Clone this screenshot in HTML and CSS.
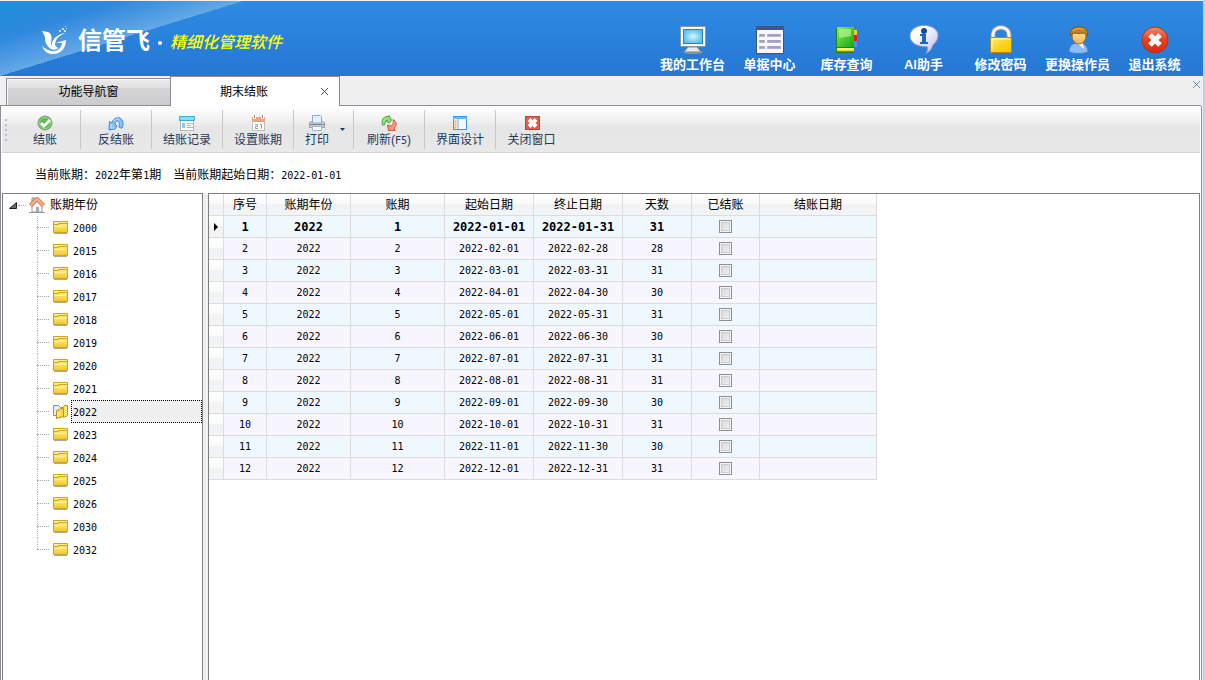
FILE: index.html
```html
<!DOCTYPE html>
<html lang="zh-CN">
  <head>
    <meta charset="utf-8">
    <title>期末结账</title>
    <link rel="stylesheet" href="styles.css">
  </head>
  <body>
    <!-- Shared icons and gradients -->
    <svg class="sprite" width="0" height="0" aria-hidden="true">
      <defs>
        <linearGradient id="g-folder" x1="0" y1="0" x2="0" y2="1">
          <stop offset="0" stop-color="#fff59a"/><stop offset="1" stop-color="#f2c62c"/>
        </linearGradient>
        <radialGradient id="g-screen">
          <stop offset="0" stop-color="#d4f8ff"/><stop offset="1" stop-color="#5cc0ee"/>
        </radialGradient>
        <linearGradient id="g-green" x1="0" y1="0" x2="1" y2="1">
          <stop offset="0" stop-color="#8cec58"/><stop offset="1" stop-color="#12a812"/>
        </linearGradient>
        <linearGradient id="g-bubble" x1="0" y1="0" x2="1" y2="1">
          <stop offset="0.3" stop-color="#fff"/><stop offset="1" stop-color="#b9b9ea"/>
        </linearGradient>
        <linearGradient id="g-lock" x1="0" y1="0" x2="1" y2="1">
          <stop offset="0" stop-color="#fff27a"/><stop offset="0.5" stop-color="#ffd21c"/><stop offset="1" stop-color="#ffc400"/>
        </linearGradient>
        <linearGradient id="g-red" x1="0" y1="0" x2="0" y2="1">
          <stop offset="0" stop-color="#f58a6c"/><stop offset="0.5" stop-color="#e84020"/><stop offset="1" stop-color="#d82c10"/>
        </linearGradient>
        <linearGradient id="g-skin" x1="0" y1="0" x2="0" y2="1">
          <stop offset="0" stop-color="#ffe9a8"/><stop offset="1" stop-color="#f4b45c"/>
        </linearGradient>
      </defs>
      <symbol id="folder" viewBox="0 0 15 14">
        <path d="M1 12.500h13" stroke="#a8a8a8"/>
        <path d="M.5.5h14v11H.5z" fill="url(#g-folder)" stroke="#d2a21a"/>
        <path d="M1 3.500h4.500v-1H14" fill="none" stroke="#d2a21a"/>
        <path d="M2 5.500h11" stroke="#fff38c"/>
      </symbol>
    </svg>

    <header class="app-header">
      <div class="brand">
        <svg class="brand-mark" viewBox="0 0 26 28" aria-hidden="true">
          <path d="M0 5l6 1c4 2 4 6 3 11v6C3 19 3 14 3 11z" fill="#fff"/>
          <path d="M24 7C14 8 9 14 9 23c2 1 5 1 7-1-2-1-3-3-3-4 1-6 5-9 11-11z" fill="#fff"/>
          <path d="M14 17l10-3c0 8-5 14-13 14-6 0-9-3-11-8 5 5 13 7 17 3 2-2 3-4 3-6z" fill="#fff"/>
          <path d="M17 4h2v2h-2zM20 2h2v2h-2zM23 0h1v1h-1zM22 4h2v2h-2zM24 2h1v1h-1z" fill="#c5e0fa"/>
        </svg>
        <span class="brand-name">信管飞</span>
        <span class="brand-dot"></span>
        <span class="brand-slogan">精细化管理软件</span>
      </div>
      <nav class="main-nav">
        <button class="nav-button">
          <svg viewBox="0 0 30 30" aria-hidden="true">
            <ellipse cx="15" cy="27" rx="10" ry="2" fill="#8496a6"/>
            <path d="M10 22h9l4 5H6z" fill="#e6eaec" stroke="#7c8994"/>
            <rect x="2.500" y="1.500" width="25" height="20" rx="1" fill="#f5f6f4" stroke="#8c989c"/>
            <rect x="5.500" y="4.500" width="19" height="14" fill="url(#g-screen)" stroke="#2f83ae"/>
          </svg>
          <span>我的工作台</span>
        </button>
        <button class="nav-button">
          <svg viewBox="0 0 30 30" aria-hidden="true">
            <rect x="1.500" y="1.500" width="27" height="27" fill="#f7f7fc" stroke="#44507c"/>
            <path d="M1 1h28v4H1z" fill="#46527f"/>
            <path d="M4 9h6v3H4zM4 15h6v3H4zM4 21h6v3H4zM12 9h14v3H12zM12 15h14v3H12zM12 21h14v3H12z" fill="#b3b3cb"/>
            <path d="M5 10h4M5 16h4M5 22h4M13 10h12M13 16h12M13 22h12" stroke="#9090b2"/>
          </svg>
          <span>单据中心</span>
        </button>
        <button class="nav-button">
          <svg viewBox="0 0 30 30" aria-hidden="true">
            <path d="M22 5h3v5h-3z" fill="#ffc83c"/>
            <path d="M22 10h3v6h-3z" fill="#e02010"/>
            <path d="M22 16h3v6h-3z" fill="#5590f0"/>
            <path d="M4 2h18v26H4z" fill="#168a18"/>
            <path d="M5 2h17v20H5z" fill="url(#g-green)"/>
            <path d="M7 4h12v7l-12 2z" fill="#b6f58a" opacity=".7"/>
            <path d="M5 23h17v3H5z" fill="#fff078"/>
            <path d="M5 26h17" stroke="#e8a800"/>
          </svg>
          <span>库存查询</span>
        </button>
        <button class="nav-button">
          <svg viewBox="0 0 30 30" aria-hidden="true">
            <path d="M15 .5c8 0 14 4 14 10 0 4-2 7-5 9-1 4-3 7-7 9 2-3 2-5 1-7C7 22 1 17 1 11 1 5 7 .5 15 .5z" fill="url(#g-bubble)" stroke="#9a9ccc"/>
            <circle cx="15" cy="6" r="3" fill="#17489c"/>
            <path d="M11 9h6v8h2v2h-8v-2h2v-6h-2z" fill="#1768d0"/>
          </svg>
          <span>AI助手</span>
        </button>
        <button class="nav-button">
          <svg viewBox="0 0 30 30" aria-hidden="true">
            <path d="M7 14V10c0-10 16-10 16 0v4" fill="none" stroke="#8e98a8" stroke-width="5"/>
            <path d="M7 14V10c0-10 16-10 16 0v4" fill="none" stroke="#f4f4f8" stroke-width="3"/>
            <rect x="4.500" y="12.500" width="21" height="15" fill="url(#g-lock)" stroke="#b88a10"/>
            <path d="M6 14h18M6 14v12" stroke="#fffbc0" fill="none"/>
          </svg>
          <span>修改密码</span>
        </button>
        <button class="nav-button">
          <svg viewBox="0 0 30 30" aria-hidden="true">
            <path d="M6 27c0-6 3-9 9-9s10 3 10 9c-5 2-14 2-19 0z" fill="#8cbcf6" stroke="#4080d4"/>
            <path d="M14 18h6l1 6z" fill="#fff"/>
            <ellipse cx="16" cy="11" rx="7" ry="8" fill="url(#g-skin)" stroke="#a86818"/>
            <path d="M8 11C6 4 10 2 16 2s10 3 8 9c-1-2-2-3-3-3-5 1-9 0-11 0z" fill="#c9801e" stroke="#8a5410"/>
            <path d="M10 6c3-3 8-3 11-1" stroke="#eeb850" fill="none"/>
          </svg>
          <span>更换操作员</span>
        </button>
        <button class="nav-button">
          <svg viewBox="0 0 30 30" aria-hidden="true">
            <circle cx="15" cy="15" r="13" fill="url(#g-red)" stroke="#b83018"/>
            <path d="M10 10l10 10M20 10L10 20" stroke="#fff" stroke-width="5"/>
          </svg>
          <span>退出系统</span>
        </button>
      </nav>
    </header>

    <div class="tab-bar">
      <button class="tab">功能导航窗</button>
      <div class="tab active">
        <span>期末结账</span>
        <button class="close-button" aria-label="关闭标签">
          <svg viewBox="0 0 9 9" aria-hidden="true"><path d="M1 1l7 7M8 1L1 8"/></svg>
        </button>
      </div>
      <div class="tab-rest">
        <button class="close-button" aria-label="关闭">
          <svg viewBox="0 0 9 9" aria-hidden="true"><path d="M1 1l7 7M8 1L1 8"/></svg>
        </button>
      </div>
    </div>

    <main class="page">
      <div class="toolbar">
        <span class="grip"></span>
        <button class="tool-button">
          <svg viewBox="0 0 16 16" aria-hidden="true">
            <circle cx="8" cy="8" r="7" fill="#58bc50" stroke="#8c9c8c"/>
            <circle cx="8" cy="8" r="5.500" fill="none" stroke="#98dc88"/>
            <path d="M4 8l3 3 6-6" fill="none" stroke="#fff" stroke-width="3"/>
          </svg>
          <span>结账</span>
        </button>
        <button class="tool-button">
          <svg viewBox="0 0 16 16" aria-hidden="true">
            <path d="M1.500 6.500L4 8c1-4 4-6 8-5 3 2 4 6 2 10-1 0-2 0-3-1 1-4 0-6-2-6-1 0-2 1-2 3l2 2-2 3-6 1z" fill="#88c4fa" stroke="#3c84d8"/>
            <path d="M3 9v4h3M6 6c1-2 3-2 5-2" fill="none" stroke="#c4e4fe"/>
          </svg>
          <span>反结账</span>
        </button>
        <button class="tool-button">
          <svg viewBox="0 0 16 16" aria-hidden="true">
            <rect x="1.500" y="1.500" width="13" height="14" fill="#fff" stroke="#b4b8bc"/>
            <path d="M.5 1.500h15v4H.5z" fill="#8ad8fa" stroke="#44a8dc"/>
            <path d="M3 8h3v5H3z" fill="#8cc8f0"/>
            <path d="M8 8.500h6M8 10.500h4M8 12.500h6" stroke="#b4b4b4"/>
          </svg>
          <span>结账记录</span>
        </button>
        <button class="tool-button">
          <svg viewBox="0 0 16 16" aria-hidden="true">
            <rect x="2.500" y="2.500" width="12" height="13" fill="#fff" stroke="#c0c0c0"/>
            <path d="M2 2h13v5H2z" fill="#f2a27a"/>
            <path d="M4.500 0v4M12.500 0v4" stroke="#fff" stroke-width="3"/>
            <path d="M4.500 0v3M12.500 0v3" stroke="#8c8c8c"/>
            <path d="M5 9.500h2.500v2H5.500v2H8M10 9.500h1.500v4" fill="none" stroke="#9c9c9c"/>
          </svg>
          <span>设置账期</span>
        </button>
        <button class="tool-button has-menu">
          <span class="tool-label">
            <svg viewBox="0 0 16 16" aria-hidden="true">
              <path d="M.5 7.500l2-1h11l2 1v5H.5z" fill="#c8ccd2" stroke="#9a9ea6"/>
              <path d="M3.500 8V.5h8l1 1V8z" fill="#e2f1fc" stroke="#8cacc8"/>
              <path d="M1 9.500h14" stroke="#80848c"/>
              <path d="M3.500 11.500h9v4h-9z" fill="#fff" stroke="#a0b4cc"/>
            </svg>
            <span>打印</span>
          </span>
          <svg class="caret" viewBox="0 0 5 3" aria-hidden="true"><path d="M0 0h5L2.500 3z" fill="#1e395b"/></svg>
        </button>
        <button class="tool-button">
          <svg viewBox="0 0 16 16" aria-hidden="true">
            <path d="M1.500 10C0 5 2 2 6 1.500h2V.5L10.500 5 8.500 8 5.500 6.500 6.500 5C4 6 4 8 3.500 10z" fill="#98dc84" stroke="#4ca444"/>
            <path d="M12 4.500c4 2 4 6 1 8.500l1 2.500H7.500L6.500 10l3 1c3-1 3-3 2.500-6.500z" fill="#f29a80" stroke="#dc5038"/>
          </svg>
          <span>刷新(<span class="num">F5</span>)</span>
        </button>
        <button class="tool-button">
          <svg viewBox="0 0 16 16" aria-hidden="true">
            <rect x="1.500" y="1.500" width="13" height="13" fill="#f7f7fd" stroke="#2e9cf0"/>
            <path d="M1 2h14v2H1z" fill="#66bcf8"/>
            <path d="M6 4v10" stroke="#64b4f4"/>
            <path d="M2.500 5.500h2v2h-2zM2.500 8.500h2v2h-2zM2.500 11.500h2v2h-2z" fill="#f4a840"/>
          </svg>
          <span>界面设计</span>
        </button>
        <button class="tool-button last">
          <svg viewBox="0 0 16 16" aria-hidden="true">
            <rect x="1.500" y="1.500" width="14" height="13" fill="#e85a48" stroke="#b8483c"/>
            <path d="M5 4.500l7 7M12 4.500l-7 7" stroke="#fff" stroke-width="4"/>
          </svg>
          <span>关闭窗口</span>
        </button>
      </div>

      <div class="period-info">
        <span>当前账期：<span class="num">2022</span>年第<span class="num">1</span>期</span>
        <span>当前账期起始日期：<span class="num">2022-01-01</span></span>
      </div>

      <div class="panels">
        <!-- Year tree -->
        <aside class="tree">
          <button class="tree-root">
            <svg class="expander" viewBox="0 0 8 7" aria-hidden="true"><path d="M7.500.5v6h-7z" fill="#6c6c6c" stroke="#202020"/></svg>
            <span class="stub"></span>
            <svg class="house" viewBox="0 0 16 16" aria-hidden="true">
              <path d="M3 1h3v6H3z" fill="#d8dce0" stroke="#8a8e94"/>
              <path d="M3 8l5-5 5 5v7H3z" fill="#fafafa" stroke="#9a9ca4"/>
              <path d="M7 10h3v5H7z" fill="#9cacbc"/>
              <path d="M1.500 8.500L8 2l6.500 6.500" fill="none" stroke="#c0502c" stroke-width="4"/>
              <path d="M1.500 8.500L8 2l6.500 6.500" fill="none" stroke="#f6ac84" stroke-width="3"/>
              <path d="M0 15.500h16" stroke="#9a9a9a"/>
            </svg>
            <span>账期年份</span>
          </button>
          <ul class="tree-list">
            <li><button class="tree-item"><svg viewBox="0 0 15 14"><use href="#folder"/></svg><span>2000</span></button></li>
            <li><button class="tree-item"><svg viewBox="0 0 15 14"><use href="#folder"/></svg><span>2015</span></button></li>
            <li><button class="tree-item"><svg viewBox="0 0 15 14"><use href="#folder"/></svg><span>2016</span></button></li>
            <li><button class="tree-item"><svg viewBox="0 0 15 14"><use href="#folder"/></svg><span>2017</span></button></li>
            <li><button class="tree-item"><svg viewBox="0 0 15 14"><use href="#folder"/></svg><span>2018</span></button></li>
            <li><button class="tree-item"><svg viewBox="0 0 15 14"><use href="#folder"/></svg><span>2019</span></button></li>
            <li><button class="tree-item"><svg viewBox="0 0 15 14"><use href="#folder"/></svg><span>2020</span></button></li>
            <li><button class="tree-item"><svg viewBox="0 0 15 14"><use href="#folder"/></svg><span>2021</span></button></li>
            <li>
              <button class="tree-item selected">
                <svg viewBox="0 0 15 14">
                  <path d="M.5.5h5l2 2v8h-7z" fill="#e4ecf6" stroke="#8494b0"/>
                  <path d="M7.500 2.500h3l1-2h3v10l-4 2z" fill="#ffe868" stroke="#c49218"/>
                  <path d="M3.500 5.500l3-1 1-1h3v8l-7 2z" fill="#f8d444" stroke="#c49218"/>
                  <path d="M5 7v5M7 6v5" stroke="#fff3a0"/>
                </svg>
                <span>2022</span>
              </button>
            </li>
            <li><button class="tree-item"><svg viewBox="0 0 15 14"><use href="#folder"/></svg><span>2023</span></button></li>
            <li><button class="tree-item"><svg viewBox="0 0 15 14"><use href="#folder"/></svg><span>2024</span></button></li>
            <li><button class="tree-item"><svg viewBox="0 0 15 14"><use href="#folder"/></svg><span>2025</span></button></li>
            <li><button class="tree-item"><svg viewBox="0 0 15 14"><use href="#folder"/></svg><span>2026</span></button></li>
            <li><button class="tree-item"><svg viewBox="0 0 15 14"><use href="#folder"/></svg><span>2030</span></button></li>
            <li><button class="tree-item"><svg viewBox="0 0 15 14"><use href="#folder"/></svg><span>2032</span></button></li>
          </ul>
        </aside>

        <!-- Period grid -->
        <section class="grid-panel">
          <table class="period-table">
            <colgroup>
              <col class="col-mark"><col class="col-no"><col class="col-year"><col class="col-period">
              <col class="col-date"><col class="col-date"><col class="col-days"><col class="col-closed"><col class="col-closed-date">
            </colgroup>
            <thead>
              <tr><th></th><th>序号</th><th>账期年份</th><th>账期</th><th>起始日期</th><th>终止日期</th><th>天数</th><th>已结账</th><th>结账日期</th></tr>
            </thead>
            <tbody>
              <tr class="current"><td><svg class="marker" viewBox="0 0 4 8" aria-hidden="true"><path d="M0 0l4 4-4 4z"/></svg></td><td>1</td><td>2022</td><td>1</td><td>2022-01-01</td><td>2022-01-31</td><td>31</td><td><input type="checkbox" aria-label="已结账 1"></td><td></td></tr>
              <tr><td></td><td>2</td><td>2022</td><td>2</td><td>2022-02-01</td><td>2022-02-28</td><td>28</td><td><input type="checkbox" aria-label="已结账 2"></td><td></td></tr>
              <tr><td></td><td>3</td><td>2022</td><td>3</td><td>2022-03-01</td><td>2022-03-31</td><td>31</td><td><input type="checkbox" aria-label="已结账 3"></td><td></td></tr>
              <tr><td></td><td>4</td><td>2022</td><td>4</td><td>2022-04-01</td><td>2022-04-30</td><td>30</td><td><input type="checkbox" aria-label="已结账 4"></td><td></td></tr>
              <tr><td></td><td>5</td><td>2022</td><td>5</td><td>2022-05-01</td><td>2022-05-31</td><td>31</td><td><input type="checkbox" aria-label="已结账 5"></td><td></td></tr>
              <tr><td></td><td>6</td><td>2022</td><td>6</td><td>2022-06-01</td><td>2022-06-30</td><td>30</td><td><input type="checkbox" aria-label="已结账 6"></td><td></td></tr>
              <tr><td></td><td>7</td><td>2022</td><td>7</td><td>2022-07-01</td><td>2022-07-31</td><td>31</td><td><input type="checkbox" aria-label="已结账 7"></td><td></td></tr>
              <tr><td></td><td>8</td><td>2022</td><td>8</td><td>2022-08-01</td><td>2022-08-31</td><td>31</td><td><input type="checkbox" aria-label="已结账 8"></td><td></td></tr>
              <tr><td></td><td>9</td><td>2022</td><td>9</td><td>2022-09-01</td><td>2022-09-30</td><td>30</td><td><input type="checkbox" aria-label="已结账 9"></td><td></td></tr>
              <tr><td></td><td>10</td><td>2022</td><td>10</td><td>2022-10-01</td><td>2022-10-31</td><td>31</td><td><input type="checkbox" aria-label="已结账 10"></td><td></td></tr>
              <tr><td></td><td>11</td><td>2022</td><td>11</td><td>2022-11-01</td><td>2022-11-30</td><td>30</td><td><input type="checkbox" aria-label="已结账 11"></td><td></td></tr>
              <tr><td></td><td>12</td><td>2022</td><td>12</td><td>2022-12-01</td><td>2022-12-31</td><td>31</td><td><input type="checkbox" aria-label="已结账 12"></td><td></td></tr>
            </tbody>
          </table>
        </section>
      </div>
    </main>
  </body>
</html>
```

FILE: styles.css
```css
:root {
  --frame: #8c8c98;
  --panel-border: #7f7f7f;
  --grid-line: #dcdcdc;
  --surface: #f0f0f0;
  --tool-text: #1e395b;
  --font-num: "DejaVu Sans Mono", "Noto Sans CJK SC", monospace;
}

/* Basic resets */
* {
  margin: 0;
  padding: 0;
  box-sizing: border-box;
}

body {
  display: flex;
  flex-direction: column;
  height: 100vh;
  overflow: hidden;
  padding-top: 1px;
  border-right: 2px solid #b9d1ea;
  background: var(--surface);
  color: #000;
  font-family: "Liberation Sans", "Noto Sans CJK SC", sans-serif;
  font-size: 12px;
  line-height: 16px;
}

button {
  border: none;
  background: none;
  color: inherit;
  font: inherit;
  cursor: pointer;
}

svg {
  display: block;
  flex: none;
}

.sprite {
  position: absolute;
}

.num {
  font-family: var(--font-num);
  font-size: 10px;
}

/* Header */
.app-header {
  display: flex;
  justify-content: space-between;
  height: 75px;
  flex: none;
  padding-right: 10px;
  background:
    linear-gradient(to bottom right, #1e90da 0%, #2f88dc 25%, #64a8e6 50%, transparent 50%) 0 0 / 243px 75px no-repeat,
    linear-gradient(#2e8be4, #2577d3);
  color: #fff;
}

.brand {
  display: flex;
  align-items: center;
  padding: 4px 0 0 42px;
}

.brand-mark {
  width: 26px;
  height: 28px;
  margin-bottom: 2px;
}

.brand-name {
  margin-left: 10px;
  font-size: 24px;
  font-weight: bold;
  line-height: 32px;
}

.brand-dot {
  width: 4px;
  height: 4px;
  margin: 4px 8px 0 8px;
  border-radius: 50%;
  background: #fff;
}

.brand-slogan {
  padding-top: 4px;
  color: #ff0;
  font-size: 16px;
  font-style: italic;
  font-weight: 500;
  line-height: 24px;
}

.main-nav {
  display: flex;
}

.nav-button {
  display: flex;
  flex-direction: column;
  align-items: center;
  width: 77px;
  padding-top: 24px;
  font-size: 13px;
  font-weight: bold;
  line-height: 20px;
  white-space: nowrap;
}

.nav-button svg {
  width: 30px;
  height: 30px;
}

/* Tabs */
.tab-bar {
  display: flex;
  align-items: flex-end;
  height: 30px;
  flex: none;
  margin-right: 2px;
}

.tab-bar::before {
  content: "";
  width: 6px;
  align-self: stretch;
  border-bottom: 1px solid var(--frame);
}

.tab {
  width: 164px;
  height: 28px;
  border: 1px solid var(--frame);
  border-right: none;
  background: linear-gradient(#ebebeb 0, #dedede 35%, #d4d4d4 36%, #cccccc 100%);
  box-shadow: inset 1px 1px #f8f8f8;
  text-align: center;
}

.tab.active {
  display: flex;
  align-items: center;
  justify-content: flex-end;
  gap: 52px;
  width: 170px;
  height: 30px;
  padding-right: 10px;
  border-right: 1px solid var(--frame);
  border-bottom: none;
  background: #fff;
  box-shadow: none;
}

.tab-rest {
  display: flex;
  flex: 1;
  align-items: flex-start;
  justify-content: flex-end;
  align-self: stretch;
  padding-top: 4px;
  border-bottom: 1px solid var(--frame);
}

.close-button svg {
  width: 9px;
  height: 9px;
  fill: none;
  stroke: #505058;
}

.tab-rest .close-button svg {
  stroke: #7c8ca4;
}

/* Page */
.page {
  display: flex;
  flex: 1;
  flex-direction: column;
  min-height: 0;
  margin-right: 1px;
  border-right: 1px solid var(--frame);
  border-left: 1px solid var(--frame);
  background: #fff;
}

.toolbar {
  display: flex;
  flex: none;
  height: 47px;
  margin: 0 1px;
  padding: 4px 0 3px 3px;
  border-bottom: 1px solid #d4d4d4;
  background: linear-gradient(#fff 0, #f2f2f2 30%, #e6e6e6 45%, #e8e8e8 100%);
}

.grip {
  width: 2px;
  height: 23px;
  margin: 9px 3px 0 0;
  background: repeating-linear-gradient(#c0c0c0 0 2px, transparent 2px 5px);
}

.tool-button {
  display: flex;
  flex-direction: column;
  align-items: center;
  width: 71px;
  padding-top: 5px;
  border-right: 1px solid #c8c8c8;
  color: var(--tool-text);
  white-space: nowrap;
}

.tool-button.last {
  border-right: none;
}

.tool-button svg {
  width: 16px;
  height: 16px;
}

.tool-button > span,
.tool-label > span {
  padding-top: 1px;
}

.tool-button.has-menu {
  flex-direction: row;
  align-items: flex-start;
  width: 60px;
  padding-left: 11px;
  gap: 11px;
}

.tool-button.has-menu .tool-label {
  display: flex;
  flex-direction: column;
  align-items: center;
  padding-top: 0;
}

.tool-button .caret {
  width: 5px;
  height: 3px;
  margin-top: 13px;
}

.period-info {
  display: flex;
  flex: none;
  gap: 12px;
  height: 40px;
  padding: 14px 0 0 34px;
}

.panels {
  display: flex;
  flex: 1;
  min-height: 0;
  padding: 0 1px;
}

/* Tree */
.tree {
  width: 201px;
  flex: none;
  border: 1px solid var(--panel-border);
  border-bottom: none;
}

.tree-root {
  display: flex;
  align-items: center;
  width: 100%;
  height: 22px;
  padding-left: 6px;
}

.expander {
  width: 8px;
  height: 7px;
}

.stub {
  width: 8px;
  margin: 0 3px 0 1px;
  border-top: 1px dotted #a8a8a8;
}

.house {
  width: 16px;
  height: 16px;
  margin-right: 5px;
}

.tree-list {
  padding-left: 34px;
  list-style: none;
}

.tree-list li {
  background: repeating-linear-gradient(#b4b4b4 0 1px, transparent 1px 2px) 0 0 / 1px 100% no-repeat;
}

.tree-list li:last-child {
  background-size: 1px 12px;
}

.tree-item {
  display: flex;
  align-items: center;
  width: 100%;
  height: 23px;
  text-align: left;
}

.tree-item::before {
  content: "";
  width: 12px;
  margin-right: 4px;
  border-top: 1px dotted #a8a8a8;
}

.tree-item svg {
  width: 15px;
  height: 14px;
  margin-right: 3px;
}

.tree-item span {
  flex: 1;
  padding: 4px 1px 2px;
  border: 1px dotted transparent;
  font-family: var(--font-num);
  font-size: 10px;
  line-height: 15px;
}

.tree-item.selected span {
  border-color: #000;
  background: var(--surface);
}

/* Grid */
.grid-panel {
  flex: 1;
  min-width: 0;
  margin-left: 5px;
  border: 1px solid var(--panel-border);
  border-bottom: none;
  box-shadow: -5px 0 var(--surface);
}

.period-table {
  width: 668px;
  border-collapse: separate;
  border-spacing: 0;
  table-layout: fixed;
}

.col-mark { width: 15px; }
.col-no { width: 43px; }
.col-year { width: 84px; }
.col-period { width: 94px; }
.col-date { width: 89px; }
.col-days { width: 69px; }
.col-closed { width: 68px; }
.col-closed-date { width: 117px; }

.period-table th,
.period-table td {
  height: 22px;
  border-right: 1px solid var(--grid-line);
  border-bottom: 1px solid var(--grid-line);
  text-align: center;
}

.period-table th {
  padding-top: 1px;
  background: linear-gradient(#fff 0, #fafafa 45%, #f1f2f3 50%, #f3f4f5 100%);
  font-weight: normal;
}

.period-table td {
  background: #f7f5fe;
  font-family: var(--font-num);
  font-size: 10px;
}

.period-table tr:nth-child(odd) td {
  background: #f0f8ff;
}

.period-table tbody td:first-child,
.period-table tbody tr:nth-child(odd) td:first-child {
  background: linear-gradient(#fff 0, #fafafa 45%, #f1f2f3 50%, #f3f4f5 100%);
}

.period-table .current td {
  font-size: 12px;
  font-weight: bold;
}

.marker {
  width: 4px;
  height: 8px;
  margin: 0 auto;
}

.period-table input {
  display: block;
  width: 13px;
  height: 13px;
  margin: 0 auto;
  border: 1px solid #8e8f8f;
  appearance: none;
  background: linear-gradient(135deg, #cfd2d6, #f6f6f6);
  box-shadow: inset 0 0 0 1px #f4f4f4, inset 0 0 0 2px #c8cccf;
}
```
